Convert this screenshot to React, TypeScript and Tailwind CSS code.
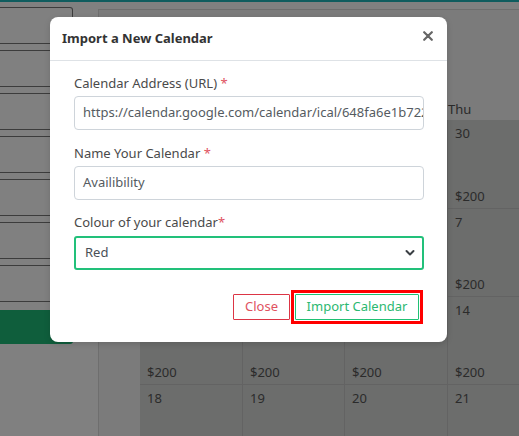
import React from "react";

const rows = [
  ["27", "28", "29", "30"],
  ["4", "5", "6", "7"],
  ["11", "12", "13", "14"],
  ["18", "19", "20", "21"],
];

export default function App() {
  return (
    <div
      className="relative w-[519px] h-[436px] overflow-hidden bg-[#808080]"
      style={{ fontFamily: '"Noto Sans", "Open Sans", sans-serif' }}
    >
      <div className="h-[2px] bg-[#0f5c5e]" />
      <div className="flex pt-[5px]">
        {/* left panel */}
        <div className="w-[73px] shrink-0 flex flex-col">
          <div className="flex flex-col gap-[6px]">
            {Array.from({ length: 7 }).map((_, i) => (
              <div
                key={i}
                className="h-[37px] border border-l-0 border-[#3c3c3c] rounded-r-[3px]"
              />
            ))}
          </div>
          <div className="mt-[8px] h-[34px] bg-[#0f5e3c] rounded-br-[3px]" />
        </div>
        {/* calendar */}
        <div className="ml-[25px] mt-[2px] flex-1 border-t border-l border-[#6e6e6e] grid grid-cols-[41px_102px_102px_103px_102px] grid-rows-[110px_88px_88px_88px_88px]">
          <div className="bg-[#7b7b7b]" />
          {["Mon", "Tue", "Wed", "Thu"].map((d) => (
            <div
              key={d}
              className="bg-[#7b7b7b] flex items-end pb-[2px] pl-[1px] text-[13px] leading-[18px] text-[#2a2a2a]"
            >
              {d}
            </div>
          ))}
          {rows.map((r, ri) => (
            <React.Fragment key={ri}>
              <div className="bg-[#7b7b7b]" />
              {r.map((n, ci) => (
                <div
                  key={ci}
                  className={`bg-[#6c6d6c] border-[#636363] ${ri > 0 ? "border-t" : ""} ${ci > 0 ? "border-l" : ""} flex flex-col justify-between pl-[7px] pt-[3px] pb-[2px] text-[13px] leading-[20px] text-[#2b2b2b]`}
                >
                  <span>{n}</span>
                  {ri < 3 && <span>$200</span>}
                </div>
              ))}
            </React.Fragment>
          ))}
        </div>
      </div>

      {/* modal */}
      <div className="absolute left-[50px] top-[17px] w-[397px] h-[325px] bg-white rounded-[8px] shadow-[0_2px_6px_rgba(0,0,0,0.15)]">
        <div className="h-[44px] flex items-center justify-between pl-[12px] pr-[14px] border-b border-[#dee2e6]">
          <span className="text-[13px] font-bold text-[#333333]">Import a New Calendar</span>
          <svg width="10" height="10" viewBox="0 0 10 10" className="mt-[-6px]">
            <path d="M1.2 1.2 L8.8 8.8 M8.8 1.2 L1.2 8.8" stroke="#666" strokeWidth="2.2" strokeLinecap="round" />
          </svg>
        </div>
        <div className="pt-[12px] pl-[24px] pr-[23px]">
          <div className="text-[13px] leading-[20px] text-[#4a4a4a] mb-[3px]">
            Calendar Address (URL) <span className="text-[#e0525f]">*</span>
          </div>
          <div className="h-[34px] border border-[#ced4da] rounded-[4px] pl-[8px] flex items-center overflow-hidden whitespace-nowrap text-[13px] text-[#555b61]">
            https://calendar.google.com/calendar/ical/648fa6e1b722
          </div>
          <div className="mt-[13px] text-[13px] leading-[20px] text-[#4a4a4a] mb-[3px]">
            Name Your Calendar <span className="text-[#e0525f]">*</span>
          </div>
          <div className="h-[34px] border border-[#ced4da] rounded-[4px] pl-[8px] flex items-center text-[13px] text-[#555b61]">
            Availibility
          </div>
          <div className="mt-[12px] text-[13px] leading-[20px] text-[#4a4a4a] mb-[4px]">
            Colour of your calendar<span className="text-[#e0525f]">*</span>
          </div>
          <div className="h-[34px] border-2 border-[#22c07a] rounded-[3px] pl-[9px] pr-[7px] flex items-center justify-between text-[13px] text-[#495057]">
            <span>Red</span>
            <svg width="10" height="8" viewBox="0 0 10 8">
              <path d="M1.5 2 L5 5.5 L8.5 2" stroke="#3a3f44" strokeWidth="2" fill="none" strokeLinecap="round" strokeLinejoin="round" />
            </svg>
          </div>
          <div className="mt-[20px] mr-[1px] flex justify-end items-center gap-[1px]">
            <button className="h-[26px] w-[57px] border border-[#dc3545] rounded-[1px] text-[13px] text-[#e0525f] bg-white">
              Close
            </button>
            <div className="border-[3px] border-[#ff0000] p-[1px]">
              <button className="block h-[26px] w-[124px] border border-[#20c074] rounded-[1px] text-[13px] text-[#2bb871] bg-white">
                Import Calendar
              </button>
            </div>
          </div>
        </div>
      </div>
    </div>
  );
}
